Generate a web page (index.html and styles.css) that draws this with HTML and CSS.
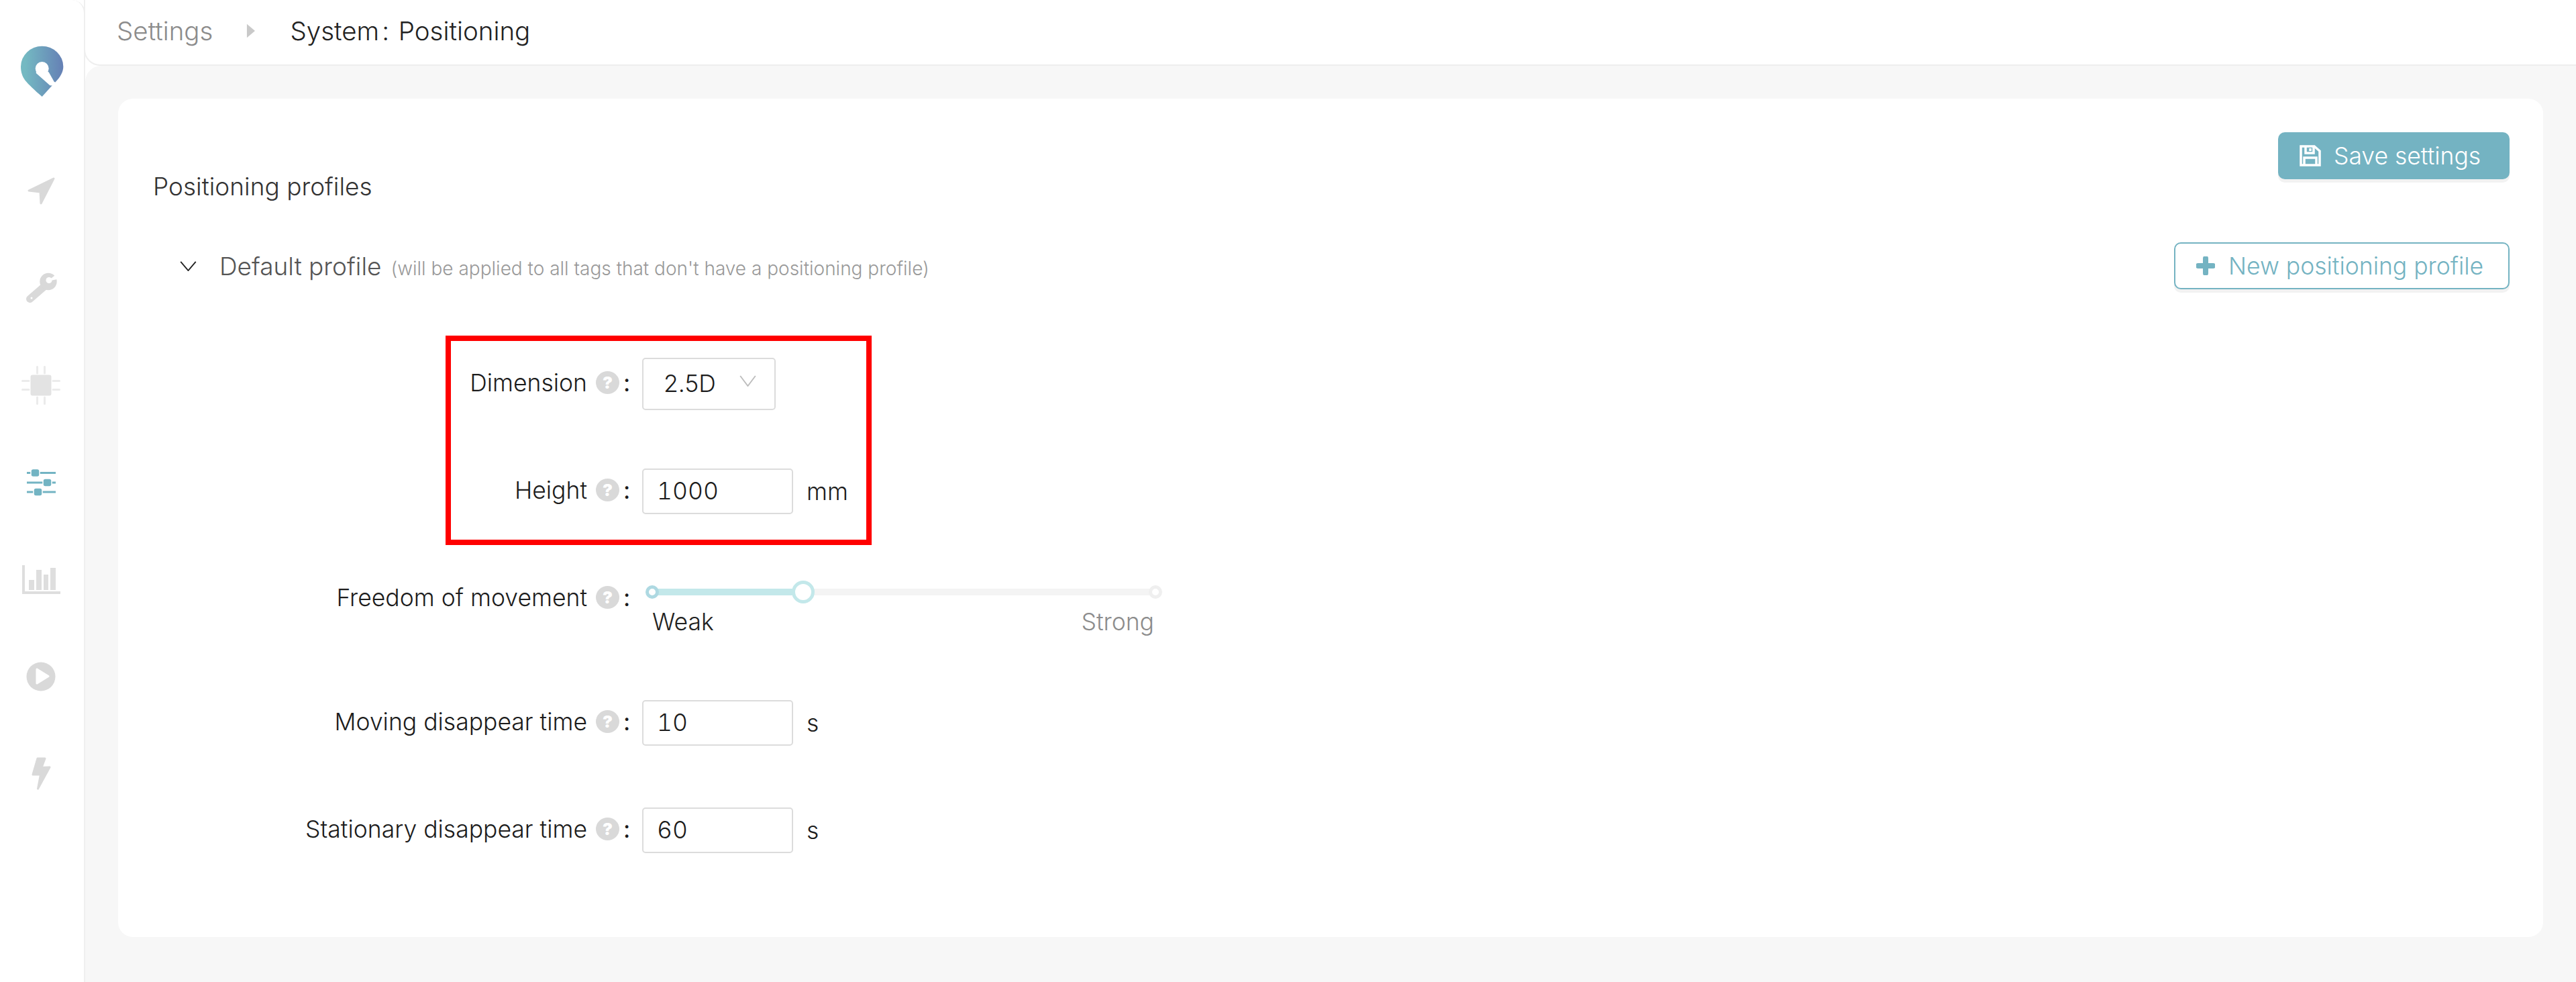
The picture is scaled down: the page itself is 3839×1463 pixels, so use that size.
FILE: index.html
```html
<!DOCTYPE html>
<html lang="en">
<head>
<meta charset="utf-8">
<title>Settings - System: Positioning</title>
<link rel="stylesheet" href="styles.css">
</head>
<body>
<div class="app">
  <aside class="sidebar">
    <svg class="logo" viewBox="0 0 360 360">
      <defs><linearGradient id="lg" x1="0" x2="1" y1="0" y2="0"><stop offset="0.1" stop-color="#74b9c2"/><stop offset="1" stop-color="#6580b5"/></linearGradient></defs>
      <path fill="url(#lg)" d="M185 312 C150 282 125 258 110 240 C96 222 90 200 90 178 A95 92 0 0 1 280 178 C280 200 268 224 245 247 L225 268 Z"/>
      <circle cx="185" cy="186" r="30" fill="#fff"/>
      <path fill="#fff" stroke="#fff" stroke-width="8" stroke-linejoin="round" d="M162 205 L222 258 L262 262 L236 248 L212 205 Z"/>
    </svg>
    <svg class="nav-icon" viewBox="0 0 60 60"><path class="fill-a" d="M49 11 L12 29 L29 31 L30 48 Z"/></svg>
    <svg class="nav-icon" viewBox="0 0 60 60">
      <path class="wrench-handle" d="M13.500 46.500 L36 27"/>
      <circle class="wrench-head" cx="41" cy="20.500" r="12.700"/>
      <path class="wrench-notch" d="M40 20 L56 7 L59 16 Z"/>
      <circle class="wrench-notch-c" cx="42" cy="18.500" r="4.500"/>
      <circle class="wrench-notch-c" cx="16" cy="45" r="1.500"/>
    </svg>
    <svg class="nav-icon" viewBox="0 0 60 60">
      <rect class="chip" x="14.500" y="14.500" width="31" height="31" rx="3"/>
      <path class="chip-legs" d="M24.500 2.500V12M35.500 2.500V12M24.500 48V57.500M35.500 48V57.500M2.500 23.500H12M2.500 36.500H12M48 23.500H57.500M48 36.500H57.500"/>
    </svg>
    <svg class="nav-icon" viewBox="0 0 60 60">
      <path class="slide-line" d="M9 15.500H52M9 30H52M9 44H52"/>
      <rect class="slide-knob" x="15" y="9.500" width="13" height="12" rx="3.500"/>
      <rect class="slide-knob" x="33" y="24" width="13" height="12" rx="3.500"/>
      <rect class="slide-knob" x="19" y="38" width="13" height="12" rx="3.500"/>
    </svg>
    <svg class="nav-icon" viewBox="0 0 60 60">
      <path class="fill-b" d="M2 9H6V48H59V52H2Z"/>
      <path class="fill-b" d="M12 31H20V46H12ZM23 16H31V46H23ZM34 23H41V46H34ZM44 13H52V46H44Z"/>
    </svg>
    <svg class="nav-icon" viewBox="0 0 60 60">
      <circle class="fill-a" cx="30" cy="30" r="21.500"/>
      <path class="play-tri" d="M24 19 L41 29.500 L24 40 Z"/>
    </svg>
    <svg class="nav-icon" viewBox="0 0 60 60"><path class="fill-a bolt" d="M25 7H36L31 20.500L43 20L25.500 52L29.500 31H18Z"/></svg>
  </aside>
  <main class="main">
    <header class="topbar">
      <span class="crumb-muted">Settings</span>
      <svg class="crumb-sep" viewBox="0 0 14 22"><path d="M1 0 L14 11 L1 22 Z"/></svg>
      <span class="crumb-current">System<span class="crumb-colon">:</span> Positioning</span>
    </header>
    <div class="content">
      <section class="card">
        <div class="card-head">
          <h2 class="title">Positioning profiles</h2>
          <button class="btn btn-solid">
            <svg class="btn-ico-save" viewBox="0 0 32 32"><path class="save-line" d="M2 2H22L30 9V30H2Z"/><path class="save-line" d="M9 2V12H21V2M16 5V9"/><path class="save-line" d="M7 30V19H25V30"/></svg>
            Save settings
          </button>
        </div>
        <div class="profile-row">
          <div class="profile-name">
            <svg class="chev" viewBox="0 0 26 16"><path d="M1 1L13 15L25 1"/></svg>
            <span class="pname">Default profile</span>
            <span class="phint">(will be applied to all tags that don't have a positioning profile)</span>
          </div>
          <button class="btn btn-line">
            <svg class="btn-ico-plus" viewBox="0 0 28 28"><path d="M14 3V25M3 14H25"/></svg>
            New positioning profile
          </button>
        </div>
        <form class="form">
          <div class="annot"></div>
          <div class="row row-dim">
            <div class="lab">Dimension<span class="help">?</span><span class="colon">:</span></div>
            <div class="select"><span>2.5D</span><svg class="sel-chev" viewBox="0 0 26 18"><path d="M1 1L13 17L25 1"/></svg></div>
          </div>
          <div class="row row-h">
            <div class="lab">Height<span class="help">?</span><span class="colon">:</span></div>
            <div class="input">1000</div><span class="unit">mm</span>
          </div>
          <div class="row row-free">
            <div class="lab">Freedom of movement<span class="help">?</span><span class="colon">:</span></div>
            <div class="slider">
              <div class="track"><div class="track-on"></div><span class="dot dot-start"></span><span class="dot dot-end"></span><span class="handle"></span></div>
              <div class="marks"><span class="mark-on">Weak</span><span class="mark-off">Strong</span></div>
            </div>
          </div>
          <div class="row row-mov">
            <div class="lab">Moving disappear time<span class="help">?</span><span class="colon">:</span></div>
            <div class="input">10</div><span class="unit">s</span>
          </div>
          <div class="row row-sta">
            <div class="lab">Stationary disappear time<span class="help">?</span><span class="colon">:</span></div>
            <div class="input">60</div><span class="unit">s</span>
          </div>
        </form>
      </section>
    </div>
  </main>
</div>
</body>
</html>
```

FILE: styles.css
```css
* { box-sizing: border-box; }
html, body { margin: 0; height: 100%; background: #fff; }
body { font-family: Inter, "Liberation Sans", sans-serif; font-weight: 300; font-size: 35.5px; color: #1c1c1c; overflow: hidden; }
.app { display: flex; height: 1463px; }

.sidebar { width: 127px; flex: none; display: flex; flex-direction: column; align-items: center; padding: 40px 3px 0 0; gap: 84.7px; border-right: 2px solid #efefef; border-top-right-radius: 20px; background: #fff; }
.logo { width: 120px; height: 120px; margin-bottom: 10px; flex: none; }
.nav-icon { width: 60px; height: 60px; flex: none; }
.fill-a { fill: #d9d9d9; }
.fill-b { fill: #dedede; }
.nav-icon .fill-a:first-child:last-child { stroke: #d9d9d9; stroke-width: 3; stroke-linejoin: round; }
.wrench-handle { stroke: #d9d9d9; stroke-width: 11; stroke-linecap: round; fill: none; }
.wrench-head { fill: #d9d9d9; }
.wrench-notch, .wrench-notch-c { fill: #fff; }
.chip { fill: #e3e3e3; }
.chip-legs { stroke: #ebebeb; stroke-width: 3; stroke-linecap: round; fill: none; }
.slide-line { stroke: #73b4c3; stroke-width: 3; fill: none; }
.slide-knob { fill: #73b4c3; stroke: #fff; stroke-width: 1.500; }
.play-tri { fill: #fff; stroke: #fff; stroke-width: 3; stroke-linejoin: round; }

.main { flex: 1; min-width: 0; display: flex; flex-direction: column; }
.topbar { height: 98px; flex: none; display: flex; align-items: center; padding: 0 0 4px 47px; margin-left: -2px; background: #fff; border-bottom: 2px solid #eee; border-left: 2px solid #efefef; border-bottom-left-radius: 24px; position: relative; font-size: 38.5px; }
.crumb-muted { color: #8c8c8c; font-weight: 300; }
.crumb-sep { width: 13px; height: 22px; margin: 0 52px 0 50px; fill: #c9c9c9; }
.crumb-current { color: #222; }
.crumb-colon { margin: 0 3px 0 4px; }

.content { flex: 1; background: #f7f7f7; padding: 49px 49px 67px 49px; border-top-left-radius: 24px; min-height: 0; display: flex; }
.card { flex: 1; background: #fff; border-radius: 22px; padding: 50px 50px 0 52px; }

.card-head { display: flex; justify-content: space-between; align-items: flex-start; height: 164px; }
.title { margin: 62px 0 0; font-size: 37px; font-weight: 300; line-height: 38px; color: #333; }

.btn { font-family: inherit; font-size: 35.5px; font-weight: 300; display: flex; align-items: center; height: 70px; border-radius: 10px; cursor: pointer; white-space: nowrap; }
.btn-solid { width: 345px; padding: 0 0 0 32px; border: none; background: #74b3c2; color: #fff; box-shadow: 0 5px 0 #f2f2f2; }
.btn-line { width: 500px; padding: 0 0 0 31px; border: 2px solid #74b3c2; background: #fff; color: #74b3c2; box-shadow: 0 5px 0 #f2f2f2; }
.btn-ico-save { width: 32px; height: 32px; margin-right: 19px; }
.save-line { fill: none; stroke: #fff; stroke-width: 3.500; }
.btn-ico-plus { width: 28px; height: 28px; margin-right: 20px; }
.btn-ico-plus path { fill: none; stroke: #74b3c2; stroke-width: 8; stroke-linecap: round; }

.profile-row { display: flex; justify-content: space-between; align-items: center; height: 70px; }
.profile-name { display: flex; align-items: baseline; padding-left: 40px; }
.chev { width: 25px; height: 15px; margin-right: 34px; align-self: center; }
.chev path, .sel-chev path { fill: none; stroke: #222; stroke-width: 2; }
.sel-chev path { stroke: #bdbdbd; }
.pname { font-size: 37px; color: #555; font-weight: 300; }
.phint { font-size: 28px; color: #999; margin-left: 14px; font-weight: 300; }

.form { position: relative; margin-top: 102px; }
.annot { position: absolute; left: 436px; top: -33px; width: 635px; height: 312px; border: 8px solid #f00; pointer-events: none; }
.row { display: flex; align-items: center; }
.row-dim { height: 78px; }
.row-h { height: 68px; margin-top: 87px; }
.row-free { height: 92px; margin-top: 92px; align-items: flex-start; }
.row-mov { height: 68px; margin-top: 93px; }
.row-sta { height: 68px; margin-top: 92px; }
.lab { width: 717px; flex: none; display: flex; justify-content: flex-end; align-items: center; margin-right: 12px; white-space: nowrap; position: relative; top: -2px; }
.help { width: 35px; height: 34px; flex: none; border-radius: 50%; background: #d9d9d9; color: #fff; font-size: 25px; font-weight: 900; line-height: 34px; text-align: center; margin-left: 13px; }
.colon { margin-left: 6px; width: 16px; font-weight: 400; }
.row-free .lab { height: 68px; }
.select, .input { border: 2px solid #dcdcdc; border-radius: 5px; background: #fff; font-weight: 300; }
.select { width: 199px; height: 78px; display: flex; align-items: center; justify-content: space-between; padding: 0 27px 2px 30px; }
.sel-chev { width: 25px; height: 17px; margin-bottom: 8px; }
.input { width: 225px; height: 68px; display: flex; align-items: center; padding-left: 20px; padding-bottom: 2px; font-variant-numeric: tabular-nums; }
.unit { margin-left: 20px; }

.slider { width: 760px; margin-left: 15px; position: relative; padding-top: 19px; }
.track { height: 10px; background: #f4f4f4; position: relative; width: 750px; }
.track-on { height: 10px; width: 30%; background: #c3e8ea; }
.dot { position: absolute; top: -5px; width: 20px; height: 20px; border-radius: 50%; background: #fff; border: 5px solid #aed9e2; }
.dot-start { left: -10px; }
.dot-end { right: -10px; border-color: #efefef; }
.handle { position: absolute; top: -12px; left: calc(30% - 17px); width: 34px; height: 34px; border-radius: 50%; background: #fff; border: 5px solid #c3e8ea; }
.marks { display: flex; justify-content: space-between; margin-top: 18px; width: 748px; }
.mark-on { color: #222; }
.mark-off { color: #8c8c8c; }
```
